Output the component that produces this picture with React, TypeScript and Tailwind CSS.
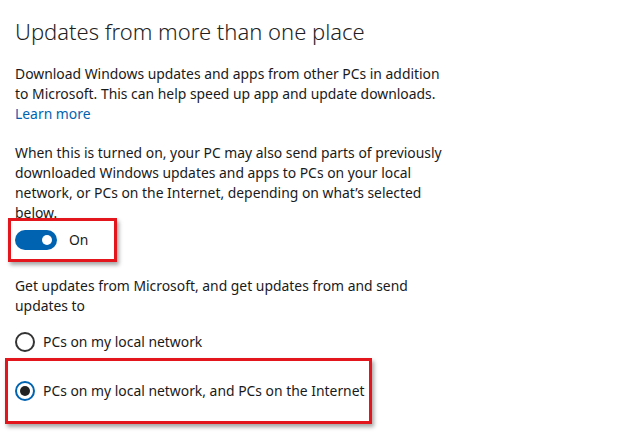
import React, { useState } from 'react';

const App: React.FC = () => {
  const [isOn, setIsOn] = useState(true);
  const [choice, setChoice] = useState<'local' | 'internet'>('internet');

  return (
    <div className="min-h-screen w-[620px] h-[438px] bg-white pl-[15px] text-[#1a1a1a] font-['Noto_Sans',sans-serif] overflow-hidden">
      {/* Heading */}
      <h1 className="pt-[16px] text-[22px] leading-[30px] font-light text-[#1f1f1f]">
        Updates from more than one place
      </h1>

      {/* Intro */}
      <p className="mt-[18px] text-[13.9px] leading-[20px] whitespace-nowrap">
        Download Windows updates and apps from other PCs in addition
        <br />
        to Microsoft. This can help speed up app and update downloads.
        <br />
        <a href="#" className="text-[#0063b1]">Learn more</a>
      </p>

      <p className="mt-[19px] text-[13.9px] leading-[20px] whitespace-nowrap">
        When this is turned on, your PC may also send parts of previously
        <br />
        downloaded Windows updates and apps to PCs on your local
        <br />
        network, or PCs on the Internet, depending on what’s selected
        <br />
        below.
      </p>

      {/* Toggle (highlighted) */}
      <div className="-mt-[5px] -ml-[7px] w-[109px] h-[44px] border-[3px] border-[#e3161d] shadow-[2px_3px_4px_rgba(0,0,0,0.35)] flex items-center pl-[4px]">
        <button
          onClick={() => setIsOn(!isOn)}
          className={`w-[42px] h-[20px] rounded-full flex items-center px-[5px] ${isOn ? 'bg-[#0063b1] justify-end' : 'bg-white border-2 border-[#333] justify-start'}`}
        >
          <span className={`w-[10px] h-[10px] rounded-full ${isOn ? 'bg-white' : 'bg-[#333]'}`} />
        </button>
        <span className="ml-[12px] text-[13.9px]">{isOn ? 'On' : 'Off'}</span>
      </div>

      <p className="mt-[14px] text-[13.9px] leading-[20px] whitespace-nowrap">
        Get updates from Microsoft, and get updates from and send
        <br />
        updates to
      </p>

      {/* Radios */}
      <label className="mt-[16px] flex items-center h-[20px] cursor-pointer" onClick={() => setChoice('local')}>
        <span className={`w-[20px] h-[20px] rounded-full border-2 flex items-center justify-center ${choice === 'local' ? 'border-[#0063b1]' : 'border-[#333]'}`}>
          {choice === 'local' && <span className="w-[10px] h-[10px] rounded-full bg-[#222]" />}
        </span>
        <span className="ml-[8px] text-[13.9px] whitespace-nowrap">PCs on my local network</span>
      </label>

      <div className="mt-[6px] -ml-[10px] w-[367px] h-[66px] border-[3px] border-[#e3161d] shadow-[2px_3px_4px_rgba(0,0,0,0.35)] flex items-center pl-[7px]">
        <label className="flex items-center h-[20px] cursor-pointer" onClick={() => setChoice('internet')}>
          <span className={`shrink-0 w-[20px] h-[20px] rounded-full border-2 flex items-center justify-center ${choice === 'internet' ? 'border-[#0063b1]' : 'border-[#333]'}`}>
            {choice === 'internet' && <span className="w-[10px] h-[10px] rounded-full bg-[#222]" />}
          </span>
          <span className="ml-[8px] text-[13.9px] whitespace-nowrap">PCs on my local network, and PCs on the Internet</span>
        </label>
      </div>
    </div>
  );
};

export default App;
